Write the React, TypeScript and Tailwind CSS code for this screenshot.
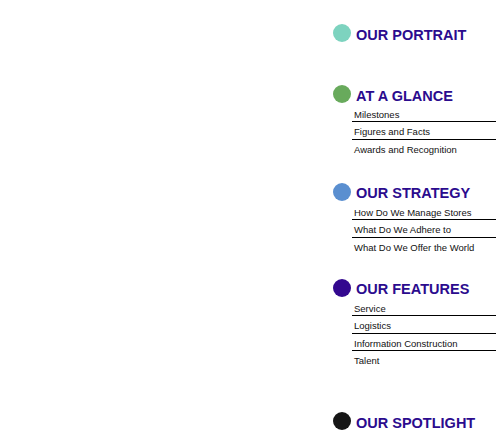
import React from "react";

const sections = [
  { title: "OUR PORTRAIT", color: "bg-[#7dd3bf]", mt: "mt-[24px]", items: [] as string[] },
  {
    title: "AT A GLANCE",
    color: "bg-[#68aa5c]",
    mt: "mt-[41px]",
    items: ["Milestones", "Figures and Facts", "Awards and Recognition"],
  },
  {
    title: "OUR STRATEGY",
    color: "bg-[#5a8fd0]",
    mt: "mt-[26px]",
    items: ["How Do We Manage Stores", "What Do We Adhere to", "What Do We Offer the World"],
  },
  {
    title: "OUR FEATURES",
    color: "bg-[#33088f]",
    mt: "mt-[24px]",
    items: ["Service", "Logistics", "Information Construction", "Talent"],
  },
  { title: "OUR SPOTLIGHT", color: "bg-[#161616]", mt: "mt-[44px]", items: [] as string[] },
];

export default function App() {
  return (
    <div className="w-[496px] h-[440px] bg-white flex justify-end overflow-hidden font-['Liberation_Sans',Arial,sans-serif]">
      <div className="w-[163px] flex flex-col">
        {sections.map((s) => (
          <div key={s.title} className={s.mt}>
            <div className="flex items-start h-[20px]">
              <div className={"w-[18px] h-[18px] rounded-full shrink-0 " + s.color}></div>
              <div className="ml-[5px] mt-[0.5px] text-[14.5px] leading-[20px] font-bold text-[#2b0b8e] whitespace-nowrap">
                {s.title}
              </div>
            </div>
            {s.items.length > 0 && (
              <div className="ml-[19px] flex flex-col">
                {s.items.map((it, i) => {
                  const last = i === s.items.length - 1;
                  return (
                    <div
                      key={it}
                      className={
                        "h-[17.33px] pt-[4px] pl-[2px] text-[9.5px] leading-[11px] text-[#111] whitespace-nowrap " +
                        (last ? "" : "border-b border-black")
                      }
                    >
                      {it}
                    </div>
                  );
                })}
              </div>
            )}
          </div>
        ))}
      </div>
    </div>
  );
}
